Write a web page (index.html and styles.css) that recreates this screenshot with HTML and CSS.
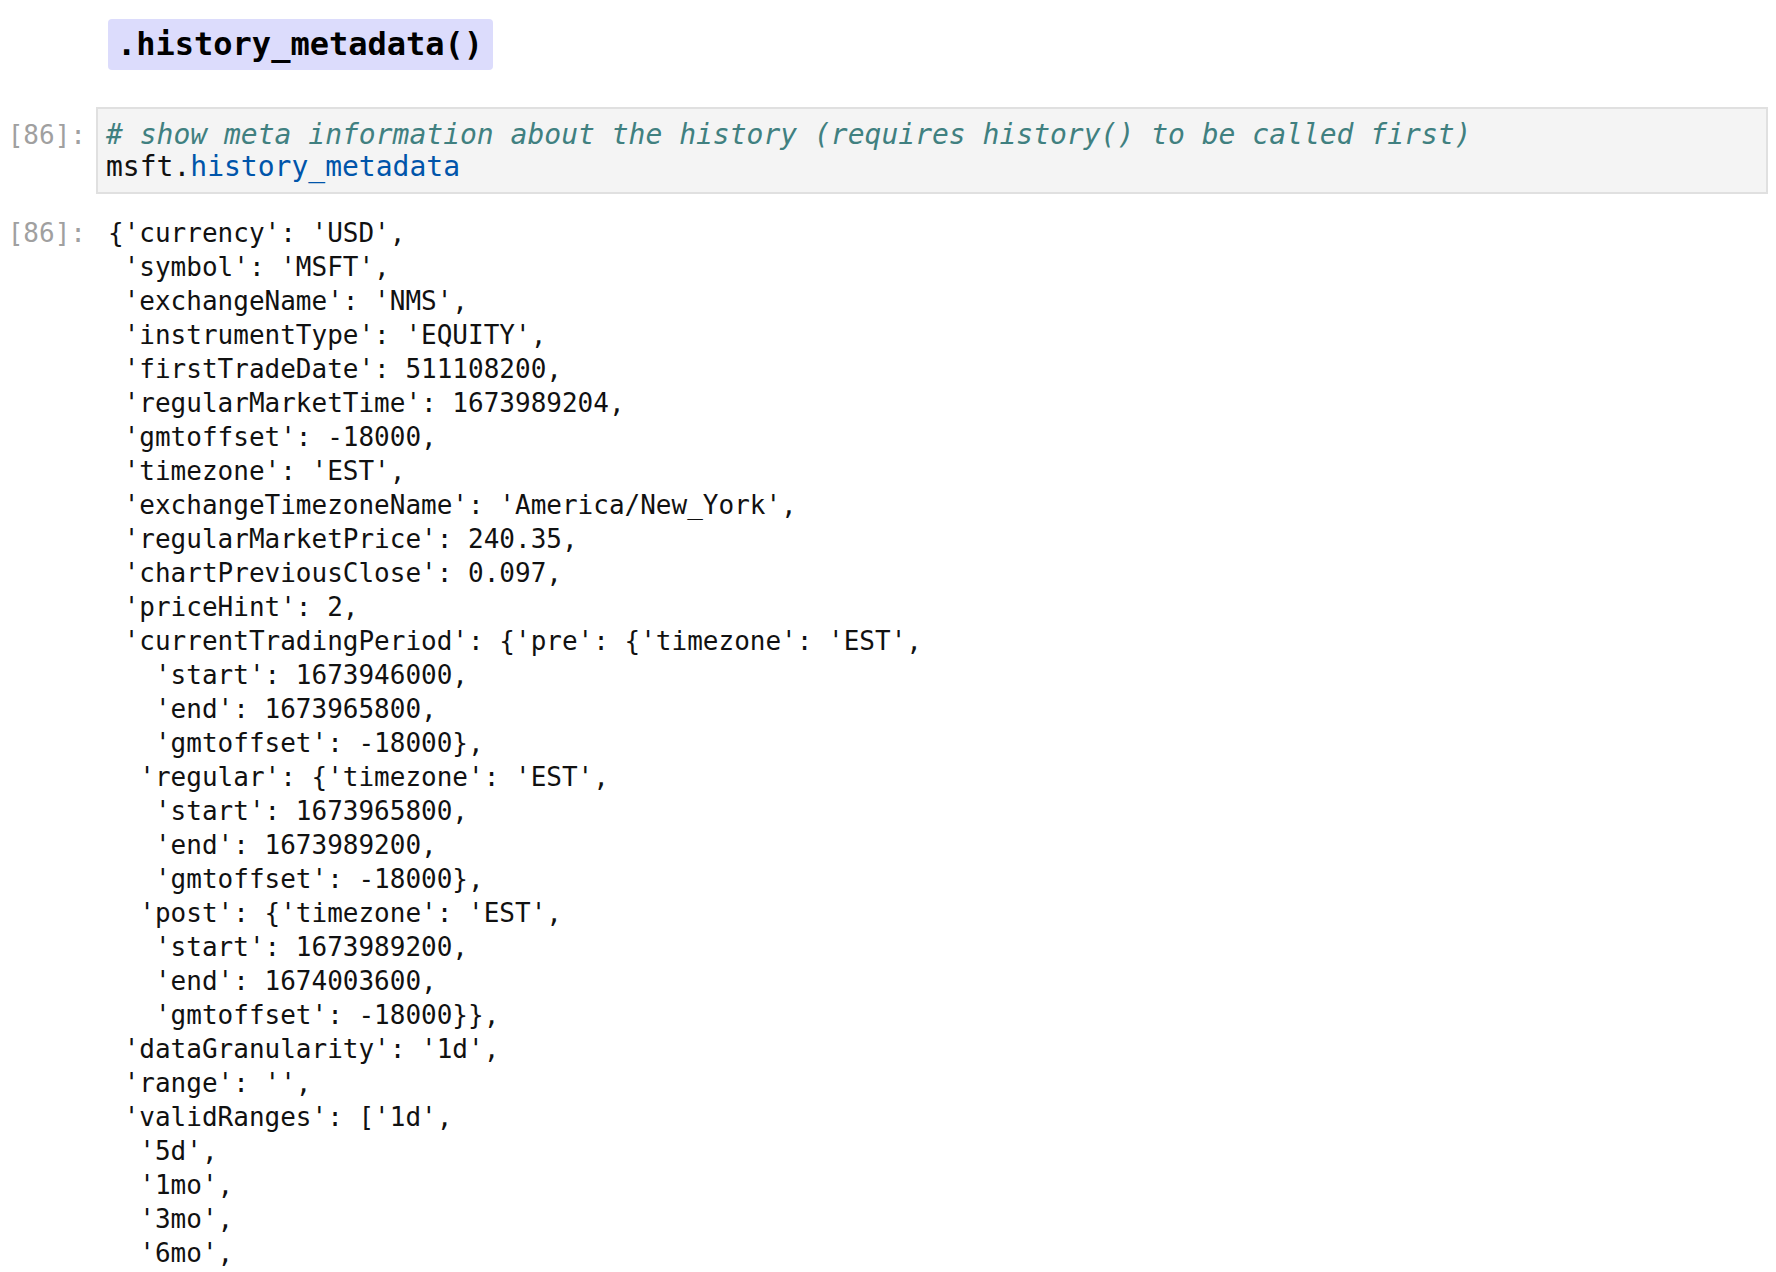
FILE: index.html
```html
<!DOCTYPE html>
<html>
<head>
<meta charset="utf-8">
<link rel="stylesheet" href="styles.css">
</head>
<body>
<div class="md-cell">
  <h3 class="md-heading"><code class="md-code">.history_metadata()</code></h3>
</div>
<div class="cell in-cell">
  <div class="prompt in-prompt">[86]:</div>
  <div class="input-box"><pre class="code"><span class="cm-comment"># show meta information about the history (requires history() to be called first)</span>
msft.<span class="cm-property">history_metadata</span></pre></div>
</div>
<div class="cell out-cell">
  <div class="prompt out-prompt">[86]:</div>
  <pre class="output">{'currency': 'USD',
 'symbol': 'MSFT',
 'exchangeName': 'NMS',
 'instrumentType': 'EQUITY',
 'firstTradeDate': 511108200,
 'regularMarketTime': 1673989204,
 'gmtoffset': -18000,
 'timezone': 'EST',
 'exchangeTimezoneName': 'America/New_York',
 'regularMarketPrice': 240.35,
 'chartPreviousClose': 0.097,
 'priceHint': 2,
 'currentTradingPeriod': {'pre': {'timezone': 'EST',
   'start': 1673946000,
   'end': 1673965800,
   'gmtoffset': -18000},
  'regular': {'timezone': 'EST',
   'start': 1673965800,
   'end': 1673989200,
   'gmtoffset': -18000},
  'post': {'timezone': 'EST',
   'start': 1673989200,
   'end': 1674003600,
   'gmtoffset': -18000}},
 'dataGranularity': '1d',
 'range': '',
 'validRanges': ['1d',
  '5d',
  '1mo',
  '3mo',
  '6mo',</pre>
</div>
</body>
</html>
```
FILE: styles.css
```css
html, body {
  margin: 0;
  padding: 0;
  background: #ffffff;
}
body {
  font-family: "DejaVu Sans Mono", "Liberation Mono", monospace;
  color: #111111;
  overflow: hidden;
}
.md-cell {
  padding: 19px 0 0 108px;
}
.md-heading {
  margin: 0;
  font-size: 32px;
  font-weight: bold;
}
.md-code {
  display: inline-block;
  font-family: "DejaVu Sans Mono", monospace;
  font-size: 32px;
  font-weight: bold;
  line-height: 37px;
  padding: 7px 10px 7px 9px;
  background: #dcdcfc;
  border-radius: 4px;
  color: #000;
}
.cell {
  display: flex;
  align-items: flex-start;
}
.in-cell {
  margin-top: 37px;
  padding-right: 8px;
}
.prompt {
  width: 96px;
  flex: none;
  box-sizing: border-box;
  padding-right: 10px;
  text-align: right;
  color: #a0a0a0;
  font-size: 26px;
}
.in-prompt {
  padding-top: 12px;
  line-height: 32px;
}
.input-box {
  flex: 1;
  background: #f4f4f4;
  border: 2px solid #e0e0e0;
  padding: 10px 8px;
}
.code {
  margin: 0;
  font-family: "DejaVu Sans Mono", monospace;
  font-size: 28px;
  line-height: 31.7px;
  color: #111;
  white-space: pre;
}
.cm-comment {
  color: #408080;
  font-style: italic;
}
.cm-property {
  color: #0055aa;
}
.out-cell {
  margin-top: 22px;
}
.out-prompt {
  line-height: 34px;
}
.output {
  margin: 0;
  padding-left: 12px;
  font-family: "DejaVu Sans Mono", monospace;
  font-size: 26px;
  line-height: 34px;
  color: #111;
  white-space: pre;
}
```
